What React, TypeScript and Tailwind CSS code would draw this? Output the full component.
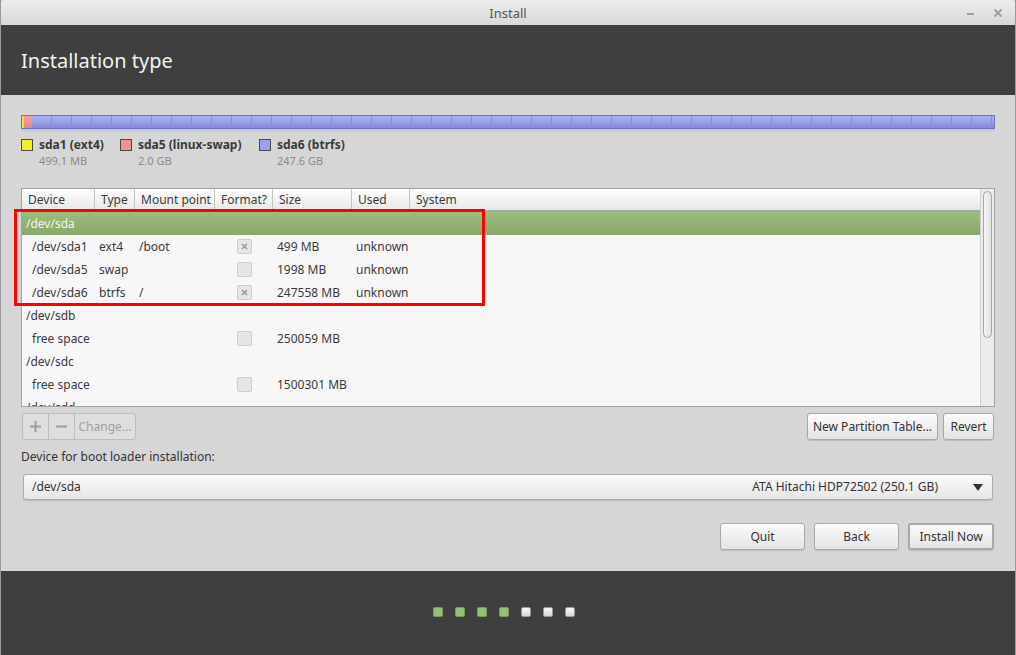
const cols = [
    { label: 'Device', w: 'w-[73px]' },
    { label: 'Type', w: 'w-[40px]' },
    { label: 'Mount point', w: 'w-[80px]' },
    { label: 'Format?', w: 'w-[58px]' },
    { label: 'Size', w: 'w-[79px]' },
    { label: 'Used', w: 'w-[58px]' },
    { label: 'System', w: 'flex-1' },
];

type Row = { kind: 'disk' | 'part'; dev: string; type?: string; mount?: string; fmt?: 'on' | 'off'; size?: string; used?: string; selected?: boolean };

const rows: Row[] = [
    { kind: 'disk', dev: '/dev/sda', selected: true },
    { kind: 'part', dev: '/dev/sda1', type: 'ext4', mount: '/boot', fmt: 'on', size: '499 MB', used: 'unknown' },
    { kind: 'part', dev: '/dev/sda5', type: 'swap', mount: '', fmt: 'off', size: '1998 MB', used: 'unknown' },
    { kind: 'part', dev: '/dev/sda6', type: 'btrfs', mount: '/', fmt: 'on', size: '247558 MB', used: 'unknown' },
    { kind: 'disk', dev: '/dev/sdb' },
    { kind: 'part', dev: 'free space', fmt: 'off', size: '250059 MB' },
    { kind: 'disk', dev: '/dev/sdc' },
    { kind: 'part', dev: 'free space', fmt: 'off', size: '1500301 MB' },
    { kind: 'disk', dev: '/dev/sdd' },
];

const btn = 'h-[27px] rounded-[3px] border border-[#a9a9a9] bg-gradient-to-b from-[#fbfbfb] to-[#e4e4e4] text-[12px] text-[#333] whitespace-nowrap shadow-[0_1px_1px_rgba(0,0,0,0.12)]';

function Check({ on }: { on: boolean }) {
    return (
        <div className="w-[15px] h-[15px] rounded-[2px] border border-[#cdcdcd] bg-[#e6e6e6] flex items-center justify-center">
            {on && (
                <svg width="7" height="7" viewBox="0 0 7 7"><path d="M1 1L6 6M6 1L1 6" stroke="#9a9a9a" strokeWidth="1.6" /></svg>
            )}
        </div>
    );
}

export default function App() {
    return (
        <div className="relative w-[1016px] h-[655px] flex flex-col bg-[#d6d6d6] border-x border-[#9a9a9a] overflow-hidden" style={{ fontFamily: '"Noto Sans", "Open Sans", sans-serif' }}>
            {/* title bar */}
            <div className="h-[25px] shrink-0 relative flex items-center justify-center bg-gradient-to-b from-[#eeeeee] to-[#d8d8d8] rounded-t-[4px]">
                <span className="text-[13px] text-[#555] mt-[2px]">Install</span>
                <div className="absolute right-[12px] top-0 h-full flex items-center gap-[18px]">
                    <svg width="9" height="9" viewBox="0 0 9 9"><path d="M1 6h7" stroke="#a0a0a0" strokeWidth="2" /></svg>
                    <svg width="10" height="10" viewBox="0 0 10 10"><path d="M1.5 1.5l7 7M8.5 1.5l-7 7" stroke="#a0a0a0" strokeWidth="2" /></svg>
                </div>
            </div>

            {/* header */}
            <div className="h-[70px] shrink-0 bg-[#3f3f3f] flex items-center px-[20px]">
                <h1 className="text-[20px] text-[#f2f2f2] font-normal mt-[2px]">Installation type</h1>
            </div>

            {/* content */}
            <div className="flex-1 flex flex-col px-[20px] pt-[20px]">
                {/* partition bar */}
                <div className="w-[974px] h-[14px] flex border border-[#6f73bf] overflow-hidden">
                    <div className="w-[2px] shrink-0 bg-[#e6e62a]" />
                    <div className="w-[8px] shrink-0 bg-gradient-to-b from-[#f4a0a0] to-[#e58585]" />
                    <div className="flex-1 min-w-0 overflow-hidden flex bg-gradient-to-b from-[#a9adf2] via-[#9ca0ec] to-[#8387d8]">
                        {Array.from({ length: 49 }).map((_, i) => (
                            <div key={i} className="w-[20px] shrink-0 border-r border-[#888cd6]" />
                        ))}
                    </div>
                </div>
                <div className="w-[974px] h-[4px] bg-gradient-to-b from-[#c3c4d6] to-[#d6d6d6]" />

                {/* legend */}
                <div className="flex mt-[5px]">
                    {[
                        { c: 'bg-[#f0f02a]', name: 'sda1 (ext4)', size: '499.1 MB', w: 'w-[99px]' },
                        { c: 'bg-[#f09090]', name: 'sda5 (linux-swap)', size: '2.0 GB', w: 'w-[139px]' },
                        { c: 'bg-[#9ca0ec]', name: 'sda6 (btrfs)', size: '247.6 GB', w: 'w-[120px]' },
                    ].map(l => (
                        <div key={l.name} className={`${l.w} flex gap-[6px]`}>
                            <div className={`w-[12px] h-[12px] mt-[1px] border border-[#4a4a4a] ${l.c}`} />
                            <div className="flex flex-col">
                                <span className="text-[12px] font-bold text-[#3a3a3a] leading-[14px]">{l.name}</span>
                                <span className="text-[11px] text-[#8a8a8a] leading-[15px] mt-[1px]">{l.size}</span>
                            </div>
                        </div>
                    ))}
                </div>

                {/* partition table */}
                <div className="mt-[20px] w-[974px] h-[219px] border border-[#a3a3a3] bg-[#f7f7f7] flex overflow-hidden">
                    <div className="flex-1 flex flex-col min-w-0">
                        <div className="h-[23px] shrink-0 flex bg-gradient-to-b from-[#ffffff] to-[#e7e7e7] border-b-2 border-[#a8a8a8]">
                            {cols.map((c, i) => (
                                <div key={c.label} className={`${c.w} shrink-0 flex items-center px-[6px] whitespace-nowrap text-[12px] text-[#3a3a3a] ${i < cols.length - 1 ? 'border-r border-[#c4c4c4]' : ''}`}>{c.label}</div>
                            ))}
                        </div>
                        {rows.map((r, i) => r.kind === 'disk' ? (
                            <div key={i} className={`h-[23px] shrink-0 flex items-center px-[4px] text-[12px] ${r.selected ? 'bg-gradient-to-b from-[#9bbd7d] to-[#89a86b] text-[#f4f4f4]' : 'text-[#3a3a3a]'}`}>{r.dev}</div>
                        ) : (
                            <div key={i} className="h-[23px] shrink-0 flex items-center text-[12px] text-[#3a3a3a] whitespace-nowrap">
                                <div className="w-[73px] shrink-0 pl-[10px]">{r.dev}</div>
                                <div className="w-[40px] shrink-0 pl-[4px]">{r.type}</div>
                                <div className="w-[80px] shrink-0 pl-[4px]">{r.mount}</div>
                                <div className="w-[58px] shrink-0 flex justify-center"><Check on={r.fmt === 'on'} /></div>
                                <div className="w-[79px] shrink-0 pl-[4px]">{r.size}</div>
                                <div className="w-[58px] shrink-0 pl-[4px]">{r.used}</div>
                            </div>
                        ))}
                    </div>
                    {/* scrollbar */}
                    <div className="w-[14px] shrink-0 bg-[#ececec] border-l border-[#d0d0d0] p-[2px]">
                        <div className="h-[147px] rounded-full border border-[#a6a6a6] bg-gradient-to-r from-[#f4f4f4] to-[#e2e2e2]" />
                    </div>
                </div>

                {/* table buttons */}
                <div className="mt-[6px] flex items-center justify-between w-[974px]">
                    <div className="ml-[1px] flex h-[27px] rounded-[3px] border border-[#bdbdbd] bg-[#dedede] text-[#a0a0a0] text-[12px]">
                        <div className="w-[26px] flex items-center justify-center border-r border-[#bdbdbd]">
                            <svg width="11" height="11" viewBox="0 0 11 11"><path d="M5.5 0v11M0 5.5h11" stroke="#9c9c9c" strokeWidth="2" /></svg>
                        </div>
                        <div className="w-[26px] flex items-center justify-center border-r border-[#bdbdbd]">
                            <svg width="11" height="11" viewBox="0 0 11 11"><path d="M0 5.5h11" stroke="#9c9c9c" strokeWidth="2" /></svg>
                        </div>
                        <div className="w-[60px] flex items-center justify-center">Change...</div>
                    </div>
                    <div className="flex gap-[5px] mr-[1px]">
                        <button className={`${btn} w-[131px]`}>New Partition Table...</button>
                        <button className={`${btn} w-[51px]`}>Revert</button>
                    </div>
                </div>

                <div className="mt-[10px] text-[12px] text-[#333] leading-[14px]">Device for boot loader installation:</div>

                {/* dropdown */}
                <div className="mt-[10px] ml-[2px] w-[970px] h-[26px] flex items-center rounded-[3px] border border-[#ababab] bg-gradient-to-b from-[#fbfbfb] to-[#e6e6e6] shadow-[0_1px_1px_rgba(0,0,0,0.12)] text-[12px] text-[#333] pl-[8px] pr-[9px]">
                    <span className="flex-1">/dev/sda</span>
                    <span className="mr-[35px]">ATA Hitachi HDP72502 (250.1 GB)</span>
                    <svg width="10" height="7" viewBox="0 0 10 7"><path d="M0 0h10L5 7z" fill="#333" /></svg>
                </div>

                {/* nav buttons */}
                <div className="mt-[23px] flex justify-end gap-[9px] pr-[1px]">
                    <button className={`${btn} w-[85px]`}>Quit</button>
                    <button className={`${btn} w-[85px]`}>Back</button>
                    <button className={`${btn} w-[86px] border-[#93b874] border-2`}>Install Now</button>
                </div>
            </div>

            {/* footer */}
            <div className="h-[84px] shrink-0 bg-[#3f3f3f] flex items-center justify-center gap-[12px] pr-[8px] pb-[2px]">
                {[0, 1, 2, 3, 4, 5, 6].map(i => (
                    <div key={i} className={`w-[10px] h-[10px] rounded-[2px] border ${i < 4 ? 'bg-[#98bf78] border-[#779c5a]' : 'bg-gradient-to-b from-[#f6f6f6] to-[#d8d8d8] border-[#9a9a9a]'}`} />
                ))}
            </div>

            {/* annotation */}
            <div className="absolute left-[13px] top-[209px] w-[471px] h-[97px] border-[3px] border-[#ff0000] pointer-events-none" />
        </div>
    );
}
